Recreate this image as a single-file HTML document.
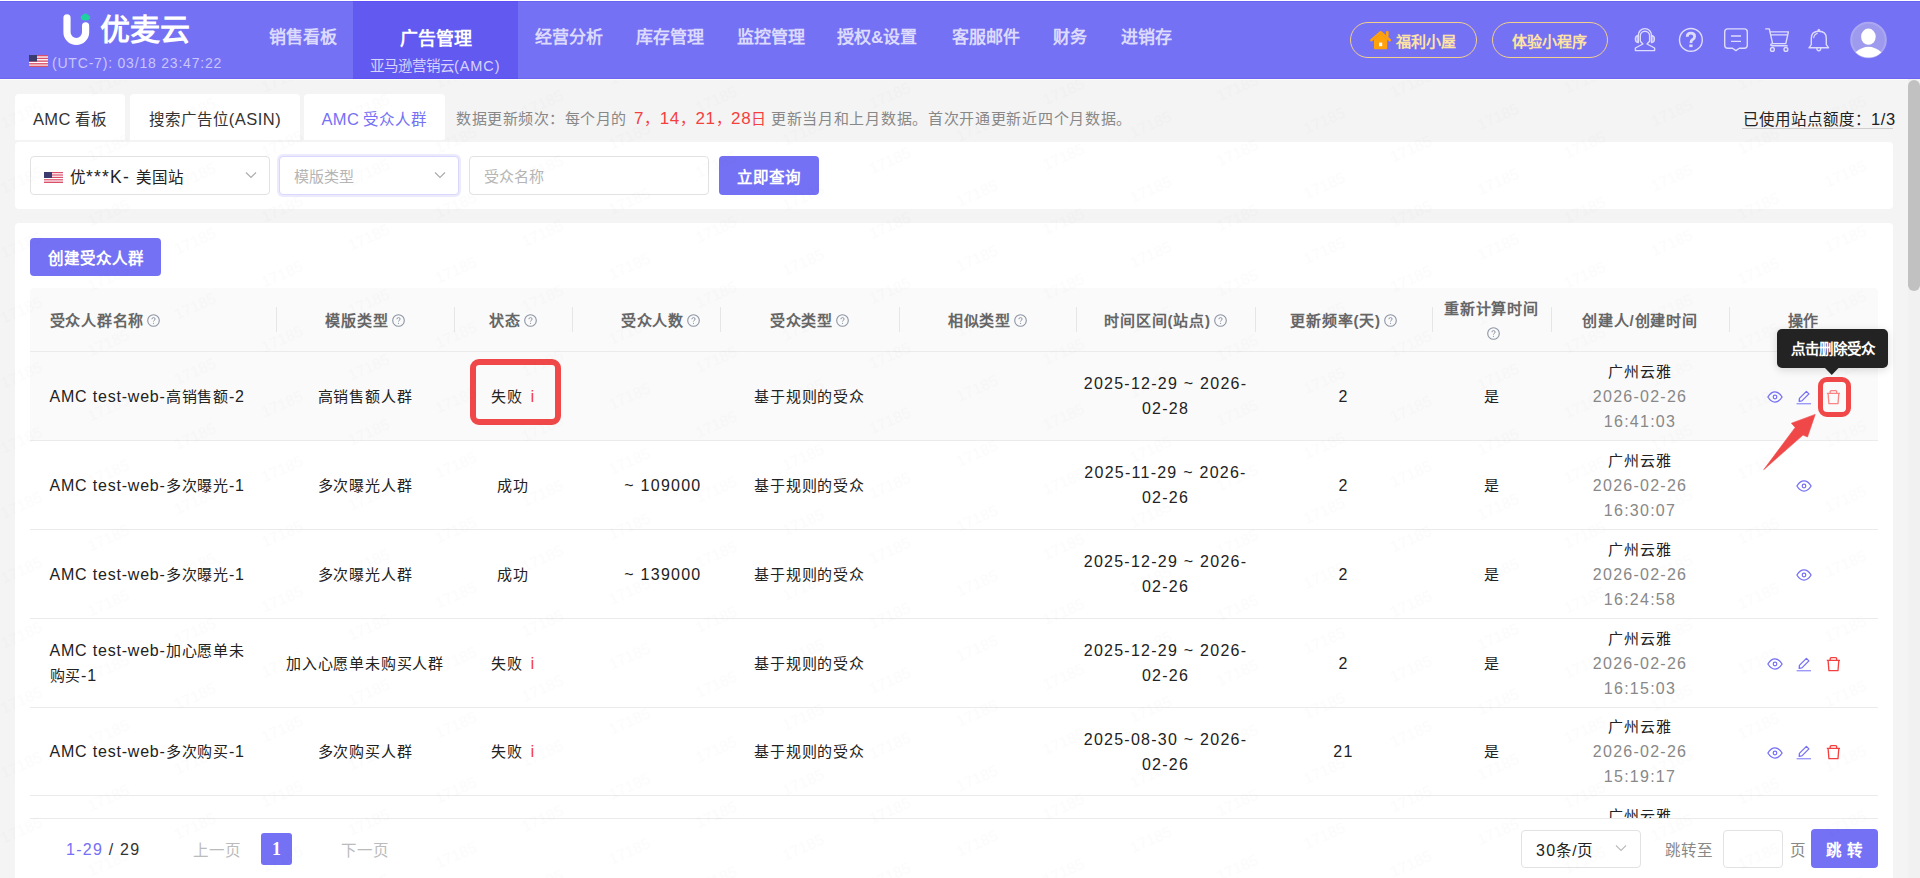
<!DOCTYPE html>
<html lang="zh-CN"><head><meta charset="utf-8">
<style>
*{box-sizing:border-box;margin:0;padding:0}
html,body{width:1920px;height:878px;overflow:hidden}
body{position:relative;background:#f4f4f4;font-family:"Liberation Sans",sans-serif;color:#222;font-size:16px}
.a{position:absolute;white-space:nowrap}
#hdr{position:absolute;left:0;top:0;width:1920px;height:80px;background:#7571f4}
.nav{position:absolute;top:27px;font-size:17px;font-weight:bold;color:#dcdafd;line-height:22px}
.card{position:absolute;background:#fff;border-radius:4px}
.tab{position:absolute;top:94px;height:46px;background:#fff;border-radius:4px 4px 0 0;font-size:15.5px;line-height:50px;color:#333;text-align:center}
.inp{position:absolute;top:156px;height:39px;border:1px solid #e2e2e2;border-radius:4px;background:#fff}
.btn{position:absolute;background:#7571f4;color:#fff;border-radius:4px;text-align:center}
.th{position:absolute;top:288px;height:63px;font-size:16px;font-weight:bold;color:#666;line-height:22px}
.dv{position:absolute;top:307px;width:1px;height:25px;background:#e6e6e6}
.rb{position:absolute;left:30px;width:1848px;height:1px;background:#ebebeb}
.q{display:inline-block;width:12px;height:12px;border:1px solid #999;border-radius:50%;font-size:9px;line-height:10px;text-align:center;color:#999;font-weight:normal;vertical-align:1px;margin-left:4px}
.c{position:absolute;text-align:center;font-size:16px;line-height:25px;color:#222}
.gr{color:#888}
.red{color:#f53f3f}
.hc{position:absolute;top:289px;height:63px;display:flex;align-items:center;font-size:15px;letter-spacing:0.8px;font-weight:bold;color:#666;line-height:22px;text-align:center}
.qi{vertical-align:-1px;margin-left:3px}
.td{position:absolute;height:88px;padding-top:0;display:flex;align-items:center;font-size:15px;letter-spacing:0.8px;line-height:25px;color:#222}
.n{font-size:16px;letter-spacing:0.8px}
.d{font-size:16px;letter-spacing:1.25px}
.ii{color:#f53f3f;margin-left:3px;font-size:17px}
.op{display:inline-block;vertical-align:middle;line-height:0}
</style></head><body>
<div id="hdr">
  <div class="a" style="left:353px;top:0;width:165px;height:79px;background:#6259f0"></div>
  <div class="a" style="left:0;top:0;width:1920px;height:1px;background:#fff"></div>
  <div class="a" style="left:0;top:1px;width:1920px;height:1px;background:#6a64f3"></div>
  <div class="a" style="left:0;top:78px;width:1920px;height:1px;background:#6c66f3"></div>
  <div class="a" style="left:353px;top:78px;width:165px;height:1px;background:#5a50f5"></div>
  <div class="a" style="left:0;top:79px;width:1920px;height:1px;background:#fcfdf7"></div>
  <div class="a" style="left:353px;top:1px;width:165px;height:1px;background:#5a50f5"></div>
  <svg class="a" style="left:0;top:0" width="1920" height="79" viewBox="0 0 1920 79">
    <path d="M67 17.8 V32.2 A9.3 9.3 0 0 0 85.6 32.2 V25.8" fill="none" stroke="#fff" stroke-width="7.2" stroke-linecap="round"/>
    <ellipse cx="85.4" cy="17.6" rx="4.7" ry="3" fill="#1fd1a0"/>
    <circle cx="85.4" cy="16.2" r="2.6" fill="#1fd1a0"/>
    <!-- flag -->
    <g>
      <rect x="29" y="55" width="19" height="12" fill="#fff"/>
      <rect x="29" y="55" width="19" height="1.4" fill="#d9506a"/>
      <rect x="29" y="57.7" width="19" height="1.4" fill="#d9506a"/>
      <rect x="29" y="60.4" width="19" height="1.4" fill="#d9506a"/>
      <rect x="29" y="63.1" width="19" height="1.4" fill="#d9506a"/>
      <rect x="29" y="65.6" width="19" height="1.4" fill="#d9506a"/>
      <rect x="29" y="55" width="8" height="6.5" fill="#3c3b6e"/>
    </g>
    <!-- right icons -->
    <g fill="none" stroke="#dedcfd" stroke-width="1.5">
      <!-- headset person -->
      <path d="M1642.9 44 L1640.3 41.2 V35.8 A4.65 4.65 0 0 1 1649.6 35.8 V41.2 L1647 44 L1654.6 48 V50.6 H1635.4 V48 Z" stroke-linejoin="round" stroke-width="1.4"/>
      <path d="M1638.3 42.5 V35.2 A6.6 6.6 0 0 1 1651.5 35.2 V42.5" stroke-width="1.4"/>
      <path d="M1638.3 35.3 Q1635.3 35.8 1635.3 38.9 Q1635.3 42.1 1638.3 42.6 Z" stroke-width="1.2" fill="rgba(222,220,253,0.45)"/>
      <path d="M1651.5 35.3 Q1654.5 35.8 1654.5 38.9 Q1654.5 42.1 1651.5 42.6 Z" stroke-width="1.2" fill="rgba(222,220,253,0.45)"/>
      <!-- question -->
      <circle cx="1690.9" cy="39.9" r="11.4" stroke-width="1.4"/>
      <path d="M1687.2 36.8 Q1687.2 33.2 1690.9 33.2 Q1694.6 33.2 1694.6 36.4 Q1694.6 38.6 1692.4 39.8 Q1690.9 40.7 1690.9 43" stroke-width="2.8"/>
      <rect x="1689.3" y="44.5" width="3.3" height="2.6" fill="#dedcfd" stroke="none"/>
      <!-- message -->
      <path d="M1727.7 28.9 H1744.3 Q1747.3 28.9 1747.3 31.9 V45.2 Q1747.3 48.2 1744.3 48.2 H1739.3 L1735.9 50.6 L1732.5 48.2 H1727.7 Q1724.7 48.2 1724.7 45.2 V31.9 Q1724.7 28.9 1727.7 28.9 Z" stroke-linejoin="round" stroke-width="1.4"/>
      <path d="M1731 36 H1741 M1731 41.4 H1741" stroke-width="1.4"/>
      <!-- cart -->
      <path d="M1765.2 28.9 H1769.3 L1772.6 43.6 H1785.8 L1788.4 31.9 H1769.8 M1770.3 34.9 H1787.6" stroke-linejoin="round" stroke-width="1.4"/>
      <path d="M1772.6 43.6 Q1770.7 43.8 1770.7 44.8 Q1770.7 45.7 1772 45.7 H1787.6" stroke-width="1.4"/>
      <circle cx="1772.4" cy="49.4" r="1.9" stroke-width="1.4"/>
      <circle cx="1785.9" cy="49.4" r="1.9" stroke-width="1.4"/>
      <!-- bell -->
      <path d="M1811.3 44.6 V38.4 Q1811.3 31.3 1818.8 31.3 Q1826.3 31.3 1826.3 38.4 V44.6 L1828.6 47.8 H1809 Z" stroke-linejoin="round" stroke-width="1.4"/>
      <circle cx="1818.8" cy="30.3" r="1" fill="#dedcfd" stroke-width="1"/>
      <path d="M1816.8 48 Q1816.8 50.8 1818.8 50.8 Q1820.8 50.8 1820.8 48" stroke-width="1.3"/>
      <path d="M1813.6 38.3 Q1814 34.3 1817.6 33.4" stroke-width="1.1"/>
    </g>
    <!-- avatar -->
    <circle cx="1868.5" cy="40" r="17.3" fill="#9e9aee" stroke="#aba8f1" stroke-width="2"/>
    <ellipse cx="1868.4" cy="36.7" rx="7.3" ry="8.1" fill="#fff"/>
    <path d="M1855.6 52.2 Q1868.5 41.2 1881.4 52.2 A18.2 18.2 0 0 1 1855.6 52.2 Z" fill="#fff"/>
    <!-- house -->
    <path d="M1371.3 40.2 L1380.6 32.2 L1389.9 40.2" fill="none" stroke="#ffa10a" stroke-width="2.5" stroke-linejoin="round" stroke-linecap="round"/>
    <rect x="1386" y="31.2" width="2.6" height="5.5" fill="#ffa10a"/>
    <path d="M1374 39.5 L1380.6 33.8 L1387.2 39.5 V48.3 Q1387.2 49.3 1386.2 49.3 H1375 Q1374 49.3 1374 48.3 Z" fill="#ffa10a"/>
    <rect x="1379" y="42.6" width="3.2" height="3.6" fill="#fff"/>
  </svg>
  <div class="a" style="left:100px;top:12px;font-size:30px;font-weight:600;line-height:36px;color:#fff">优麦云</div>
  <div class="a" style="left:52px;top:54px;font-size:14px;line-height:18px;color:#c9c6fb;letter-spacing:0.8px">(UTC-7): 03/18 23:47:22</div>
  <div class="nav" style="left:269px">销售看板</div>
  <div class="nav" style="left:400px;top:28px;font-size:18px;color:#fff">广告管理</div>
  <div class="a" style="left:370px;top:55.5px;font-size:14.5px;line-height:20px;color:#d6d3fd">亚马逊营销云<span style="letter-spacing:0.9px">(AMC)</span></div>
  <div class="nav" style="left:535px">经营分析</div>
  <div class="nav" style="left:636px">库存管理</div>
  <div class="nav" style="left:737px">监控管理</div>
  <div class="nav" style="left:837px">授权&amp;设置</div>
  <div class="nav" style="left:952px">客服邮件</div>
  <div class="nav" style="left:1053px">财务</div>
  <div class="nav" style="left:1121px">进销存</div>
  <div class="a" style="left:1350px;top:22px;width:127px;height:36px;border:1px solid #f3cf8c;border-radius:18px"></div>
  <div class="a" style="left:1396px;top:30.5px;font-size:15px;font-weight:bold;line-height:22px;color:#ffe3a3">福利小屋</div>
  <div class="a" style="left:1492px;top:22px;width:116px;height:36px;border:1px solid #f3cf8c;border-radius:18px"></div>
  <div class="a" style="left:1512px;top:31px;font-size:15px;font-weight:bold;line-height:22px;color:#ffe3a3">体验小程序</div>
</div>

<!-- tabs -->
<div class="tab" style="left:15px;width:110px"><span style="font-size:16.5px;letter-spacing:0.3px">AMC</span> 看板</div>
<div class="tab" style="left:130px;width:170px">搜索广告位<span style="font-size:16.5px;letter-spacing:0.5px">(ASIN)</span></div>
<div class="tab" style="left:304px;width:141px;color:#7570f4"><span style="font-size:16.5px;letter-spacing:0.3px">AMC</span> 受众人群</div>
<div class="a" style="left:456px;top:108px;font-size:15px;letter-spacing:0.55px;line-height:22px;color:#888">数据更新频次：每个月的</div>
<div class="a" style="left:634px;top:108px;font-size:15px;line-height:22px;color:#f53f3f;letter-spacing:0.6px"><span style="font-size:17px">7</span>，<span style="font-size:17px">14</span>，<span style="font-size:17px">21</span>，<span style="font-size:17px">28</span>日</div>
<div class="a" style="left:771px;top:108px;font-size:15px;letter-spacing:0.7px;line-height:22px;color:#888">更新当月和上月数据。首次开通更新近四个月数据。</div>
<div class="a" style="left:1743px;top:108px;font-size:15.5px;line-height:22px;color:#222">已使用站点额度：<span style="letter-spacing:0.6px;font-size:16.5px">1/3</span></div>
<div class="a" style="left:1742px;top:128px;width:151px;height:1px;background:#cfcfcf"></div>
<!-- filter card -->
<div class="card" style="left:15px;top:142px;width:1878px;height:67px"></div>
<div class="inp" style="left:30px;width:240px"></div>
<svg class="a" style="left:44px;top:172px" width="19" height="11" viewBox="0 0 19 11">
  <rect width="19" height="11" fill="#fff"/>
  <rect y="0" width="19" height="1.2" fill="#d9506a"/><rect y="2.4" width="19" height="1.2" fill="#d9506a"/><rect y="4.8" width="19" height="1.2" fill="#d9506a"/><rect y="7.2" width="19" height="1.2" fill="#d9506a"/><rect y="9.6" width="19" height="1.4" fill="#d9506a"/>
  <rect width="8" height="6" fill="#3c3b6e"/>
</svg>
<div class="a" style="left:70px;top:166px;font-size:15.5px;line-height:22px;color:#222">优<span style="font-size:17.5px;letter-spacing:1.2px">***K- </span>美国站</div>
<svg class="a" style="left:245px;top:171px" width="12" height="9" viewBox="0 0 12 9"><path d="M1 1.5 L6 6.5 L11 1.5" fill="none" stroke="#aaa" stroke-width="1.1"/></svg>
<div class="inp" style="left:279px;width:180px;border-color:#d9d7fb;box-shadow:0 0 0 2px #ecebfd"></div>
<div class="a" style="left:294px;top:166px;font-size:15px;line-height:22px;color:#b5b5b5">模版类型</div>
<svg class="a" style="left:434px;top:171px" width="12" height="9" viewBox="0 0 12 9"><path d="M1 1.5 L6 6.5 L11 1.5" fill="none" stroke="#aaa" stroke-width="1.1"/></svg>
<div class="inp" style="left:469px;width:240px"></div>
<div class="a" style="left:484px;top:166px;font-size:15px;line-height:22px;color:#b5b5b5">受众名称</div>
<div class="btn" style="left:719px;top:156px;width:100px;height:39px;font-size:15.5px;font-weight:600;line-height:44px">立即查询</div>
<!-- main card -->
<div class="card" style="left:15px;top:223px;width:1878px;height:700px"></div>
<div class="btn" style="left:30px;top:238px;width:131px;height:38px;font-size:15.5px;font-weight:600;line-height:42px">创建受众人群</div>
<!--TABLE-->
<div class="a" style="left:30px;top:288px;width:1848px;height:63px;background:#fafafa;border-radius:4px 4px 0 0"></div>
<div class="rb" style="top:351px"></div>
<div class="dv" style="left:276px"></div>
<div class="dv" style="left:454px"></div>
<div class="dv" style="left:572px"></div>
<div class="dv" style="left:720px"></div>
<div class="dv" style="left:899px"></div>
<div class="dv" style="left:1076px"></div>
<div class="dv" style="left:1255px"></div>
<div class="dv" style="left:1432px"></div>
<div class="dv" style="left:1551px"></div>
<div class="dv" style="left:1729px"></div>
<div class="hc" style="left:30px;width:246px;justify-content:flex-start;padding-left:19.5px;">受众人群名称<svg class="qi" width="13" height="13" viewBox="0 0 13 13"><circle cx="6.5" cy="6.5" r="5.8" fill="none" stroke="#8d95a5" stroke-width="1.1"/><path d="M4.9 5.2 Q4.9 3.6 6.5 3.6 Q8.1 3.6 8.1 5 Q8.1 6 7 6.5 Q6.5 6.8 6.5 7.6" fill="none" stroke="#8d95a5" stroke-width="1"/><circle cx="6.5" cy="9.3" r="0.6" fill="#8d95a5"/></svg></div>
<div class="hc" style="left:276px;width:178px;justify-content:center;">模版类型<svg class="qi" width="13" height="13" viewBox="0 0 13 13"><circle cx="6.5" cy="6.5" r="5.8" fill="none" stroke="#8d95a5" stroke-width="1.1"/><path d="M4.9 5.2 Q4.9 3.6 6.5 3.6 Q8.1 3.6 8.1 5 Q8.1 6 7 6.5 Q6.5 6.8 6.5 7.6" fill="none" stroke="#8d95a5" stroke-width="1"/><circle cx="6.5" cy="9.3" r="0.6" fill="#8d95a5"/></svg></div>
<div class="hc" style="left:454px;width:118px;justify-content:center;">状态<svg class="qi" width="13" height="13" viewBox="0 0 13 13"><circle cx="6.5" cy="6.5" r="5.8" fill="none" stroke="#8d95a5" stroke-width="1.1"/><path d="M4.9 5.2 Q4.9 3.6 6.5 3.6 Q8.1 3.6 8.1 5 Q8.1 6 7 6.5 Q6.5 6.8 6.5 7.6" fill="none" stroke="#8d95a5" stroke-width="1"/><circle cx="6.5" cy="9.3" r="0.6" fill="#8d95a5"/></svg></div>
<div class="hc" style="left:572px;width:148px;justify-content:flex-end;padding-right:20px;">受众人数<svg class="qi" width="13" height="13" viewBox="0 0 13 13"><circle cx="6.5" cy="6.5" r="5.8" fill="none" stroke="#8d95a5" stroke-width="1.1"/><path d="M4.9 5.2 Q4.9 3.6 6.5 3.6 Q8.1 3.6 8.1 5 Q8.1 6 7 6.5 Q6.5 6.8 6.5 7.6" fill="none" stroke="#8d95a5" stroke-width="1"/><circle cx="6.5" cy="9.3" r="0.6" fill="#8d95a5"/></svg></div>
<div class="hc" style="left:720px;width:179px;justify-content:center;">受众类型<svg class="qi" width="13" height="13" viewBox="0 0 13 13"><circle cx="6.5" cy="6.5" r="5.8" fill="none" stroke="#8d95a5" stroke-width="1.1"/><path d="M4.9 5.2 Q4.9 3.6 6.5 3.6 Q8.1 3.6 8.1 5 Q8.1 6 7 6.5 Q6.5 6.8 6.5 7.6" fill="none" stroke="#8d95a5" stroke-width="1"/><circle cx="6.5" cy="9.3" r="0.6" fill="#8d95a5"/></svg></div>
<div class="hc" style="left:899px;width:177px;justify-content:center;">相似类型<svg class="qi" width="13" height="13" viewBox="0 0 13 13"><circle cx="6.5" cy="6.5" r="5.8" fill="none" stroke="#8d95a5" stroke-width="1.1"/><path d="M4.9 5.2 Q4.9 3.6 6.5 3.6 Q8.1 3.6 8.1 5 Q8.1 6 7 6.5 Q6.5 6.8 6.5 7.6" fill="none" stroke="#8d95a5" stroke-width="1"/><circle cx="6.5" cy="9.3" r="0.6" fill="#8d95a5"/></svg></div>
<div class="hc" style="left:1076px;width:179px;justify-content:center;">时间区间(站点)<svg class="qi" width="13" height="13" viewBox="0 0 13 13"><circle cx="6.5" cy="6.5" r="5.8" fill="none" stroke="#8d95a5" stroke-width="1.1"/><path d="M4.9 5.2 Q4.9 3.6 6.5 3.6 Q8.1 3.6 8.1 5 Q8.1 6 7 6.5 Q6.5 6.8 6.5 7.6" fill="none" stroke="#8d95a5" stroke-width="1"/><circle cx="6.5" cy="9.3" r="0.6" fill="#8d95a5"/></svg></div>
<div class="hc" style="left:1255px;width:177px;justify-content:center;">更新频率(天)<svg class="qi" width="13" height="13" viewBox="0 0 13 13"><circle cx="6.5" cy="6.5" r="5.8" fill="none" stroke="#8d95a5" stroke-width="1.1"/><path d="M4.9 5.2 Q4.9 3.6 6.5 3.6 Q8.1 3.6 8.1 5 Q8.1 6 7 6.5 Q6.5 6.8 6.5 7.6" fill="none" stroke="#8d95a5" stroke-width="1"/><circle cx="6.5" cy="9.3" r="0.6" fill="#8d95a5"/></svg></div>
<div class="hc" style="left:1432px;width:119px;justify-content:center;line-height:27px;padding-top:2px"><div>重新计算时间<br><span style="display:inline-block;height:16px;line-height:16px;position:relative;top:-2px"><svg class="qi" width="13" height="13" viewBox="0 0 13 13"><circle cx="6.5" cy="6.5" r="5.8" fill="none" stroke="#8d95a5" stroke-width="1.1"/><path d="M4.9 5.2 Q4.9 3.6 6.5 3.6 Q8.1 3.6 8.1 5 Q8.1 6 7 6.5 Q6.5 6.8 6.5 7.6" fill="none" stroke="#8d95a5" stroke-width="1"/><circle cx="6.5" cy="9.3" r="0.6" fill="#8d95a5"/></svg></span></div></div>
<div class="hc" style="left:1551px;width:178px;justify-content:center;">创建人/创建时间</div>
<div class="hc" style="left:1729px;width:149px;justify-content:center;">操作</div>
<div class="a" style="left:30px;top:352px;width:1848px;height:466px;overflow:hidden">
<div class="a" style="left:0;top:0px;width:1848px;height:88px;background:#fafafa"></div>
<div class="rb" style="left:0;top:88px"></div>
<div class="td" style="left:0px;top:0px;height:88px;width:246px;justify-content:flex-start;text-align:left;padding-left:19.5px;"><div><span class="n">AMC test-web-</span>高销售额<span class="n">-2</span></div></div>
<div class="td" style="left:246px;top:0px;height:88px;width:178px;justify-content:center;text-align:center;"><div>高销售额人群</div></div>
<div class="td" style="left:424px;top:0px;height:88px;width:118px;justify-content:center;text-align:center;"><div>失败 <span class="ii">i</span></div></div>
<div class="td" style="left:690px;top:0px;height:88px;width:179px;justify-content:center;text-align:center;"><div>基于规则的受众</div></div>
<div class="td" style="left:1046px;top:0px;height:88px;width:179px;justify-content:center;text-align:center;"><div><span class="d">2025-12-29 ~ 2026-</span><br><span class="d">02-28</span></div></div>
<div class="td" style="left:1225px;top:0px;height:88px;width:177px;justify-content:center;text-align:center;"><div><span class="d">2</span></div></div>
<div class="td" style="left:1402px;top:0px;height:88px;width:119px;justify-content:center;text-align:center;"><div>是</div></div>
<div class="td" style="left:1521px;top:0px;height:88px;width:178px;justify-content:center;text-align:center;"><div>广州云雅<br><span class="d gr">2026-02-26</span><br><span class="d gr">16:41:03</span></div></div>
<div class="td" style="left:1699px;top:0px;height:88px;width:149px;justify-content:center;text-align:center;padding-bottom:1px;"><div><span class="op" style="margin-right:13px"><svg width="16" height="12" viewBox="0 0 16 12"><path d="M0.9 6 Q4 0.9 8 0.9 Q12 0.9 15.1 6 Q12 11.1 8 11.1 Q4 11.1 0.9 6 Z" fill="none" stroke="#7570f4" stroke-width="1.3" stroke-linejoin="round"/><circle cx="8" cy="6" r="1.8" fill="none" stroke="#7570f4" stroke-width="1.2"/></svg></span><span class="op" style="margin-right:14px"><svg width="16" height="15" viewBox="0 0 16 15"><path d="M3.2 11.3 L3.4 8.4 L10.4 1.4 L12.9 3.9 L5.9 10.9 Z" fill="none" stroke="#7570f4" stroke-width="1.3" stroke-linejoin="round"/><rect x="0.6" y="13" width="14.4" height="1.4" fill="#9c99f7"/></svg></span><span class="op"><svg width="15" height="15" viewBox="0 0 15 15"><path d="M0.8 3.4 H14 M4.2 3.2 V1.8 Q4.2 0.7 5.3 0.7 H9.6 Q10.7 0.7 10.7 1.8 V3.2 M2.1 3.6 L2.9 13.6 H12 L12.8 3.6" fill="none" stroke="#f98585" stroke-width="1.3" stroke-linejoin="round"/></svg></span></div></div>
<div class="rb" style="left:0;top:177px"></div>
<div class="td" style="left:0px;top:89px;height:88px;width:246px;justify-content:flex-start;text-align:left;padding-left:19.5px;"><div><span class="n">AMC test-web-</span>多次曝光<span class="n">-1</span></div></div>
<div class="td" style="left:246px;top:89px;height:88px;width:178px;justify-content:center;text-align:center;"><div>多次曝光人群</div></div>
<div class="td" style="left:424px;top:89px;height:88px;width:118px;justify-content:center;text-align:center;"><div>成功</div></div>
<div class="td" style="left:542px;top:89px;height:88px;width:148px;justify-content:flex-end;text-align:right;padding-right:18.5px;"><div><span class="d">~ 109000</span></div></div>
<div class="td" style="left:690px;top:89px;height:88px;width:179px;justify-content:center;text-align:center;"><div>基于规则的受众</div></div>
<div class="td" style="left:1046px;top:89px;height:88px;width:179px;justify-content:center;text-align:center;"><div><span class="d">2025-11-29 ~ 2026-</span><br><span class="d">02-26</span></div></div>
<div class="td" style="left:1225px;top:89px;height:88px;width:177px;justify-content:center;text-align:center;"><div><span class="d">2</span></div></div>
<div class="td" style="left:1402px;top:89px;height:88px;width:119px;justify-content:center;text-align:center;"><div>是</div></div>
<div class="td" style="left:1521px;top:89px;height:88px;width:178px;justify-content:center;text-align:center;"><div>广州云雅<br><span class="d gr">2026-02-26</span><br><span class="d gr">16:30:07</span></div></div>
<div class="td" style="left:1699px;top:89px;height:88px;width:149px;justify-content:center;text-align:center;padding-bottom:1px;"><div><span class="op"><svg width="16" height="12" viewBox="0 0 16 12"><path d="M0.9 6 Q4 0.9 8 0.9 Q12 0.9 15.1 6 Q12 11.1 8 11.1 Q4 11.1 0.9 6 Z" fill="none" stroke="#7570f4" stroke-width="1.3" stroke-linejoin="round"/><circle cx="8" cy="6" r="1.8" fill="none" stroke="#7570f4" stroke-width="1.2"/></svg></span></div></div>
<div class="rb" style="left:0;top:266px"></div>
<div class="td" style="left:0px;top:178px;height:88px;width:246px;justify-content:flex-start;text-align:left;padding-left:19.5px;"><div><span class="n">AMC test-web-</span>多次曝光<span class="n">-1</span></div></div>
<div class="td" style="left:246px;top:178px;height:88px;width:178px;justify-content:center;text-align:center;"><div>多次曝光人群</div></div>
<div class="td" style="left:424px;top:178px;height:88px;width:118px;justify-content:center;text-align:center;"><div>成功</div></div>
<div class="td" style="left:542px;top:178px;height:88px;width:148px;justify-content:flex-end;text-align:right;padding-right:18.5px;"><div><span class="d">~ 139000</span></div></div>
<div class="td" style="left:690px;top:178px;height:88px;width:179px;justify-content:center;text-align:center;"><div>基于规则的受众</div></div>
<div class="td" style="left:1046px;top:178px;height:88px;width:179px;justify-content:center;text-align:center;"><div><span class="d">2025-12-29 ~ 2026-</span><br><span class="d">02-26</span></div></div>
<div class="td" style="left:1225px;top:178px;height:88px;width:177px;justify-content:center;text-align:center;"><div><span class="d">2</span></div></div>
<div class="td" style="left:1402px;top:178px;height:88px;width:119px;justify-content:center;text-align:center;"><div>是</div></div>
<div class="td" style="left:1521px;top:178px;height:88px;width:178px;justify-content:center;text-align:center;"><div>广州云雅<br><span class="d gr">2026-02-26</span><br><span class="d gr">16:24:58</span></div></div>
<div class="td" style="left:1699px;top:178px;height:88px;width:149px;justify-content:center;text-align:center;padding-bottom:1px;"><div><span class="op"><svg width="16" height="12" viewBox="0 0 16 12"><path d="M0.9 6 Q4 0.9 8 0.9 Q12 0.9 15.1 6 Q12 11.1 8 11.1 Q4 11.1 0.9 6 Z" fill="none" stroke="#7570f4" stroke-width="1.3" stroke-linejoin="round"/><circle cx="8" cy="6" r="1.8" fill="none" stroke="#7570f4" stroke-width="1.2"/></svg></span></div></div>
<div class="rb" style="left:0;top:355px"></div>
<div class="td" style="left:0px;top:267px;height:88px;width:246px;justify-content:flex-start;text-align:left;padding-left:19.5px;"><div><span class="n">AMC test-web-</span>加心愿单未<br>购买<span class="n">-1</span></div></div>
<div class="td" style="left:246px;top:267px;height:88px;width:178px;justify-content:center;text-align:center;"><div>加入心愿单未购买人群</div></div>
<div class="td" style="left:424px;top:267px;height:88px;width:118px;justify-content:center;text-align:center;"><div>失败 <span class="ii">i</span></div></div>
<div class="td" style="left:690px;top:267px;height:88px;width:179px;justify-content:center;text-align:center;"><div>基于规则的受众</div></div>
<div class="td" style="left:1046px;top:267px;height:88px;width:179px;justify-content:center;text-align:center;"><div><span class="d">2025-12-29 ~ 2026-</span><br><span class="d">02-26</span></div></div>
<div class="td" style="left:1225px;top:267px;height:88px;width:177px;justify-content:center;text-align:center;"><div><span class="d">2</span></div></div>
<div class="td" style="left:1402px;top:267px;height:88px;width:119px;justify-content:center;text-align:center;"><div>是</div></div>
<div class="td" style="left:1521px;top:267px;height:88px;width:178px;justify-content:center;text-align:center;"><div>广州云雅<br><span class="d gr">2026-02-26</span><br><span class="d gr">16:15:03</span></div></div>
<div class="td" style="left:1699px;top:267px;height:88px;width:149px;justify-content:center;text-align:center;padding-bottom:1px;"><div><span class="op" style="margin-right:13px"><svg width="16" height="12" viewBox="0 0 16 12"><path d="M0.9 6 Q4 0.9 8 0.9 Q12 0.9 15.1 6 Q12 11.1 8 11.1 Q4 11.1 0.9 6 Z" fill="none" stroke="#7570f4" stroke-width="1.3" stroke-linejoin="round"/><circle cx="8" cy="6" r="1.8" fill="none" stroke="#7570f4" stroke-width="1.2"/></svg></span><span class="op" style="margin-right:14px"><svg width="16" height="15" viewBox="0 0 16 15"><path d="M3.2 11.3 L3.4 8.4 L10.4 1.4 L12.9 3.9 L5.9 10.9 Z" fill="none" stroke="#7570f4" stroke-width="1.3" stroke-linejoin="round"/><rect x="0.6" y="13" width="14.4" height="1.4" fill="#9c99f7"/></svg></span><span class="op"><svg width="15" height="15" viewBox="0 0 15 15"><path d="M0.8 3.4 H14 M4.2 3.2 V1.8 Q4.2 0.7 5.3 0.7 H9.6 Q10.7 0.7 10.7 1.8 V3.2 M2.1 3.6 L2.9 13.6 H12 L12.8 3.6" fill="none" stroke="#f53f3f" stroke-width="1.3" stroke-linejoin="round"/></svg></span></div></div>
<div class="rb" style="left:0;top:443px"></div>
<div class="td" style="left:0px;top:356px;height:87px;width:246px;justify-content:flex-start;text-align:left;padding-left:19.5px;"><div><span class="n">AMC test-web-</span>多次购买<span class="n">-1</span></div></div>
<div class="td" style="left:246px;top:356px;height:87px;width:178px;justify-content:center;text-align:center;"><div>多次购买人群</div></div>
<div class="td" style="left:424px;top:356px;height:87px;width:118px;justify-content:center;text-align:center;"><div>失败 <span class="ii">i</span></div></div>
<div class="td" style="left:690px;top:356px;height:87px;width:179px;justify-content:center;text-align:center;"><div>基于规则的受众</div></div>
<div class="td" style="left:1046px;top:356px;height:87px;width:179px;justify-content:center;text-align:center;"><div><span class="d">2025-08-30 ~ 2026-</span><br><span class="d">02-26</span></div></div>
<div class="td" style="left:1225px;top:356px;height:87px;width:177px;justify-content:center;text-align:center;"><div><span class="d">21</span></div></div>
<div class="td" style="left:1402px;top:356px;height:87px;width:119px;justify-content:center;text-align:center;"><div>是</div></div>
<div class="td" style="left:1521px;top:356px;height:87px;width:178px;justify-content:center;text-align:center;"><div>广州云雅<br><span class="d gr">2026-02-26</span><br><span class="d gr">15:19:17</span></div></div>
<div class="td" style="left:1699px;top:356px;height:87px;width:149px;justify-content:center;text-align:center;padding-bottom:1px;"><div><span class="op" style="margin-right:13px"><svg width="16" height="12" viewBox="0 0 16 12"><path d="M0.9 6 Q4 0.9 8 0.9 Q12 0.9 15.1 6 Q12 11.1 8 11.1 Q4 11.1 0.9 6 Z" fill="none" stroke="#7570f4" stroke-width="1.3" stroke-linejoin="round"/><circle cx="8" cy="6" r="1.8" fill="none" stroke="#7570f4" stroke-width="1.2"/></svg></span><span class="op" style="margin-right:14px"><svg width="16" height="15" viewBox="0 0 16 15"><path d="M3.2 11.3 L3.4 8.4 L10.4 1.4 L12.9 3.9 L5.9 10.9 Z" fill="none" stroke="#7570f4" stroke-width="1.3" stroke-linejoin="round"/><rect x="0.6" y="13" width="14.4" height="1.4" fill="#9c99f7"/></svg></span><span class="op"><svg width="15" height="15" viewBox="0 0 15 15"><path d="M0.8 3.4 H14 M4.2 3.2 V1.8 Q4.2 0.7 5.3 0.7 H9.6 Q10.7 0.7 10.7 1.8 V3.2 M2.1 3.6 L2.9 13.6 H12 L12.8 3.6" fill="none" stroke="#f53f3f" stroke-width="1.3" stroke-linejoin="round"/></svg></span></div></div>
<div class="rb" style="left:0;top:532px"></div>
<div class="td" style="left:1521px;top:444px;height:88px;width:178px;justify-content:center;text-align:center;"><div>广州云雅<br><span class="d gr">2026-02-26</span><br><span class="d gr">15:10:00</span></div></div>
</div>
<div class="a" style="left:470px;top:358.5px;width:91px;height:66px;border:6px solid #f04848;border-radius:9px"></div>
<div class="a" style="left:1818px;top:376.5px;width:33px;height:40px;border:5.5px solid #f04848;border-radius:9px"></div>
<div class="a" style="left:1777px;top:329px;width:111px;height:39px;background:#232323;border-radius:5px;box-shadow:0 2px 8px rgba(0,0,0,0.15);color:#fff;font-size:14.5px;font-weight:600;line-height:41px;text-align:center">点击删除受众</div>
<svg class="a" style="left:1825px;top:368px" width="14" height="8" viewBox="0 0 14 8"><path d="M0 0 H13.5 L6.75 7 Z" fill="#232323"/></svg>
<svg class="a" style="left:1755px;top:405px" width="70" height="70" viewBox="1755 405 70 70"><path d="M1763.7 469.7 L1795.2 427.4 L1791.4 423.2 L1815.2 414.4 L1807.5 437 L1803 435.1 Z" fill="#f04848" stroke="#f04848" stroke-width="0.6" stroke-linejoin="round"/></svg>
<div class="rb" style="top:818px"></div>
<div class="a" style="left:66px;top:838.5px;font-size:16px;line-height:22px;color:#333"><span class="d" style="color:#7570f4">1-29</span><span class="d"> / 29</span></div>
<div class="a" style="left:193px;top:839.5px;font-size:15.5px;line-height:22px;color:#bbb">上一页</div>
<div class="btn" style="left:261px;top:833px;width:31px;height:32px;border-radius:3px;font-family:'Liberation Serif',serif;font-weight:bold;font-size:18px;line-height:32px">1</div>
<div class="a" style="left:341px;top:839.5px;font-size:15.5px;line-height:22px;color:#bbb">下一页</div>
<div class="inp" style="left:1521px;top:830px;width:120px;height:38px"></div>
<div class="a" style="left:1536px;top:839.5px;font-size:15.5px;line-height:22px;color:#222"><span class="d">30</span>条/页</div>
<svg class="a" style="left:1615px;top:844px" width="12" height="9" viewBox="0 0 12 9"><path d="M1 1.5 L6 6.5 L11 1.5" fill="none" stroke="#bbb" stroke-width="1.1"/></svg>
<div class="a" style="left:1665px;top:839.5px;font-size:15.5px;line-height:22px;color:#888">跳转至</div>
<div class="inp" style="left:1723px;top:830px;width:60px;height:38px"></div>
<div class="a" style="left:1790px;top:839.5px;font-size:15.5px;line-height:22px;color:#888">页</div>
<div class="btn" style="left:1811px;top:829px;width:67px;height:39px;font-size:15.5px;font-weight:bold;line-height:43px;letter-spacing:5px;padding-left:5px">跳转</div>
<div class="a" style="left:1908px;top:79px;width:12px;height:799px;background:#f1f1f1"></div>
<div class="a" style="left:1908px;top:80px;width:12px;height:211px;background:#c1c1c1;border-radius:6px"></div>
<!--/TABLE-->
<!--WM--><svg class="a" style="left:0;top:80px;pointer-events:none" width="1908" height="798" viewBox="0 80 1908 798">
<defs><pattern id="wm" patternUnits="userSpaceOnUse" width="173.7" height="65" patternTransform="translate(65.4 67.6) skewY(-1.286)">
<text x="0" y="0" transform="translate(43 16) rotate(-23)" text-anchor="middle" dominant-baseline="central" font-family="Liberation Sans" font-size="15.5" fill="#000" fill-opacity="0.016">17185</text>
<text x="0" y="0" transform="translate(129.6 46.3) rotate(-23)" text-anchor="middle" dominant-baseline="central" font-family="Liberation Sans" font-size="15.5" fill="#000" fill-opacity="0.016">17185</text>
</pattern></defs>
<rect x="0" y="80" width="1908" height="798" fill="url(#wm)"/>
</svg>
<!--/WM-->
</body></html>
